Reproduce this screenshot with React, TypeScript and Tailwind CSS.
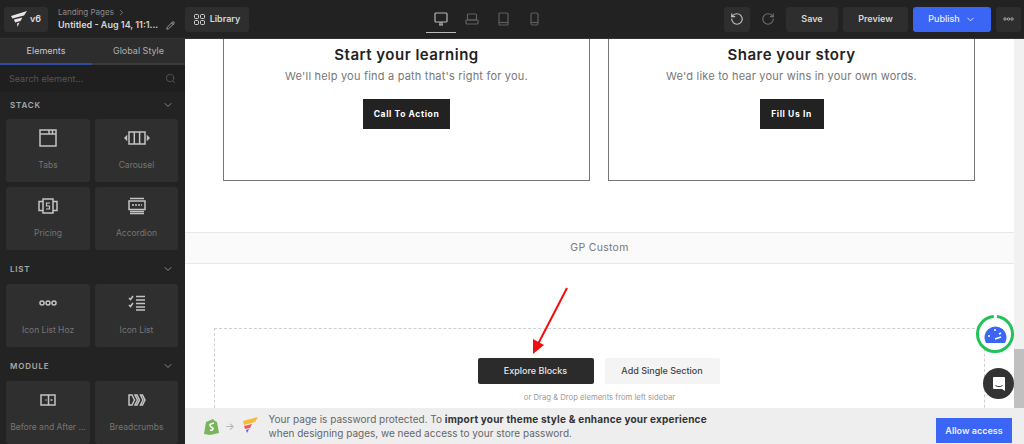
import { ChevronDown, ChevronRight, Pencil, Search, RotateCcw, RotateCw } from "lucide-react";
import type { ReactNode } from "react";

const Tile = ({ label, icon }: { label: string; icon: ReactNode }) => (
  <div className="h-[63px] rounded-[3px] bg-[#2f2f2f] flex flex-col items-center pt-[7px] text-[#757575]">
    <div className="h-[24px] flex items-center justify-center text-[#c4c4c4]">{icon}</div>
    <span className="mt-[8px] text-[8.5px] leading-[14px] whitespace-nowrap">{label}</span>
  </div>
);

const Section = ({ title, first }: { title: string; first?: boolean }) => (
  <div className={first ? "h-[28px] -mt-[1px] shrink-0 flex items-center justify-between pl-[10px] pr-[11px]" : "h-[28px] mt-[5px] mb-[1px] shrink-0 flex items-center justify-between pl-[10px] pr-[11px]"}>
    <span className="text-[8px] font-semibold tracking-[0.8px] text-[#a8a8a8]">{title}</span>
    <ChevronDown size={12} className="text-[#888]" />
  </div>
);

const icon = { fill: "none", stroke: "currentColor", strokeWidth: 1.5 };

const Sidebar = () => (
  <aside className="w-[185px] shrink-0 bg-[#232323] bg-[radial-gradient(#2e2e2e_0.5px,transparent_0.5px)] bg-[length:4px_4px] flex flex-col overflow-hidden">
    <div className="h-[26px] shrink-0 flex bg-[#2d2d2d] text-[9px]">
      <div className="w-[92px] flex items-center justify-center border-b-2 border-[#2f4a9e] text-[#c8c8c8]">Elements</div>
      <div className="flex-1 flex items-center justify-center border-b-2 border-[#3a3a3a] text-[#b0b0b0]">Global Style</div>
    </div>
    <div className="h-[27px] shrink-0 flex items-center justify-between pl-[9px] pr-[9px] bg-[#1f1f1f] text-[9px] text-[#565656]">
      <span>Search element...</span>
      <Search size={11} />
    </div>
    <Section title="STACK" first />
    <div className="shrink-0 grid grid-cols-[84px_83px] gap-x-[5px] gap-y-[5px] pl-[6px]">
      <Tile
        label="Tabs"
        icon={
          <svg width="18" height="18" viewBox="0 0 18 18" {...icon}>
            <rect x="1" y="1" width="16" height="16" />
            <path d="M1 5h16M10 1v4M13.5 1v4" />
          </svg>
        }
      />
      <Tile
        label="Carousel"
        icon={
          <svg width="26" height="14" viewBox="0 0 26 14" {...icon}>
            <rect x="5" y="1" width="16" height="12" />
            <path d="M10.3 1v12M15.6 1v12" />
            <path d="M2.5 5.5 1 7l1.5 1.500zM23.5 5.5 25 7l-1.5 1.500z" fill="currentColor" />
          </svg>
        }
      />
      <Tile
        label="Pricing"
        icon={
          <svg width="20" height="16" viewBox="0 0 20 16" {...icon}>
            <rect x="5" y="1" width="10" height="14" />
            <path d="M5 3.5H1v9h4M15 3.5h4v9h-4" />
            <path d="M12 5H8.5v3H11.5v3H8" strokeWidth={1.2} />
          </svg>
        }
      />
      <Tile
        label="Accordion"
        icon={
          <svg width="18" height="18" viewBox="0 0 18 18" {...icon}>
            <path d="M2 1.5h14M2 16.5h14" />
            <rect x="1" y="4" width="16" height="8.5" />
            <path d="M4 8h10" strokeDasharray="2 1" />
            <path d="M2 14.5h14" />
          </svg>
        }
      />
    </div>
    <Section title="LIST" />
    <div className="shrink-0 grid grid-cols-[84px_83px] gap-x-[5px] pl-[6px]">
      <Tile
        label="Icon List Hoz"
        icon={
          <svg width="18" height="6" viewBox="0 0 18 6" {...icon}>
            <circle cx="3" cy="3" r="2" />
            <circle cx="9" cy="3" r="2" />
            <circle cx="15" cy="3" r="2" />
          </svg>
        }
      />
      <Tile
        label="Icon List"
        icon={
          <svg width="18" height="16" viewBox="0 0 18 16" {...icon}>
            <path d="M1 3l1.5 1.5L5 1M1 10l1.5 1.5L5 8" />
            <path d="M8 1.5h9M8 5h9M8 8.5h9M8 12h9M8 15h9" />
          </svg>
        }
      />
    </div>
    <Section title="MODULE" />
    <div className="shrink-0 grid grid-cols-[84px_83px] gap-x-[5px] pl-[6px]">
      <Tile
        label="Before and After ..."
        icon={
          <svg width="16" height="12" viewBox="0 0 16 12" {...icon}>
            <rect x="1" y="1" width="14" height="10" />
            <path d="M8.5 1v10M5.5 6h1M10.5 6h2" />
          </svg>
        }
      />
      <Tile
        label="Breadcrumbs"
        icon={
          <svg width="18" height="12" viewBox="0 0 18 12" {...icon}>
            <path d="M1 1h3l2.5 5L4 11H1zM7 1h2l2.5 5L9 11H7l2.5-5zM12.5 1h2L17 6l-2.5 5h-2L15 6z" />
          </svg>
        }
      />
    </div>
  </aside>
);

const Topbar = () => (
  <header className="h-[39px] shrink-0 bg-[#222222] flex items-center pl-[4px] pr-[3px] border-b border-[#333]">
    <div className="w-[44px] h-[25px] rounded-[3px] bg-[#2e2e2e] flex items-center justify-center gap-[2px]">
      <svg width="17" height="17" viewBox="0 0 17 17" fill="#e6e6e6">
        <path d="M0 5 16 0l-3 4.5L1.5 7.5zM3 8.5 11.5 6.5 9.5 10 4 11.5zM6 12.5 8.5 11.5 6.5 16z" />
      </svg>
      <span className="text-[9px] font-semibold text-[#dedede]">v6</span>
    </div>
    <div className="ml-[10px] w-[117px]">
      <div className="flex items-center gap-[3px] text-[8px] leading-[12px] text-[#8a8a8a]">
        Landing Pages <ChevronRight size={9} />
      </div>
      <div className="flex items-center justify-between text-[9px] leading-[14px] font-semibold text-[#d6d6d6] whitespace-nowrap">
        Untitled - Aug 14, 11:1...
        <Pencil size={9} className="text-[#c0c0c0]" />
      </div>
    </div>
    <div className="ml-[10px] w-[64px] h-[25px] rounded-[3px] bg-[#2e2e2e] flex items-center justify-center gap-[5px] text-[9px] font-semibold text-[#d6d6d6]">
      <svg width="11" height="11" viewBox="0 0 11 11" fill="none" stroke="currentColor" strokeWidth="1">
        <rect x=".5" y=".5" width="4" height="4" rx="1" />
        <rect x="6.5" y=".5" width="4" height="4" rx="1" />
        <rect x=".5" y="6.5" width="4" height="4" rx="1" />
        <rect x="6.5" y="6.5" width="4" height="4" rx="1" />
      </svg>
      Library
    </div>
    <div className="ml-[177px] flex items-center h-full text-[#5f5f5f]">
      <div className="w-[30px] h-[33px] self-start pt-[6px] flex items-center justify-center border-b border-[#bbb] text-[#b5b5b5]">
        <svg width="14" height="14" viewBox="0 0 14 14" fill="none" stroke="currentColor" strokeWidth="1.2">
          <rect x="1" y="1" width="12" height="9" rx="1" />
          <path d="M5 13h4M6 10v3M8 10v3" />
        </svg>
      </div>
      <div className="w-[32px] flex justify-center">
        <svg width="14" height="12" viewBox="0 0 14 12" fill="none" stroke="currentColor" strokeWidth="1.2">
          <rect x="2.5" y="1" width="9" height="6" rx="1" />
          <path d="M1 7h12v3a1 1 0 0 1-1 1H2a1 1 0 0 1-1-1z" />
        </svg>
      </div>
      <div className="w-[30px] flex justify-center">
        <svg width="11" height="14" viewBox="0 0 11 14" fill="none" stroke="currentColor" strokeWidth="1.2">
          <rect x="1" y="1" width="9" height="12" rx="1" />
          <path d="M1 10.5h9" />
        </svg>
      </div>
      <div className="w-[32px] flex justify-center">
        <svg width="9" height="14" viewBox="0 0 9 14" fill="none" stroke="currentColor" strokeWidth="1.2">
          <rect x="1" y="1" width="7" height="12" rx="1.5" />
          <path d="M1 10.5h7" />
        </svg>
      </div>
    </div>
    <div className="ml-auto flex items-center gap-[5px] text-[9px] font-semibold text-[#d8d8d8]">
      <div className="w-[26px] h-[25px] rounded-[3px] bg-[#2e2e2e] flex items-center justify-center text-[#c0c0c0]">
        <RotateCcw size={14} />
      </div>
      <div className="w-[26px] h-[25px] flex items-center justify-center text-[#6e6e6e]">
        <RotateCw size={14} />
      </div>
      <div className="w-[52px] h-[25px] rounded-[3px] bg-[#2e2e2e] flex items-center justify-center">Save</div>
      <div className="w-[65px] h-[25px] rounded-[3px] bg-[#2e2e2e] flex items-center justify-center">Preview</div>
      <div className="w-[78px] h-[25px] rounded-[3px] bg-[#3b66f5] flex items-center justify-center gap-[5px] font-medium text-[#e8eeff]">
        Publish <ChevronDown size={11} />
      </div>
      <div className="w-[25px] h-[25px] rounded-[3px] bg-[#2e2e2e] flex items-center justify-center text-[#aaa]">
        <svg width="11" height="4" viewBox="0 0 11 4" fill="none" stroke="currentColor">
          <circle cx="2" cy="2" r="1.2" />
          <circle cx="5.5" cy="2" r="1.2" />
          <circle cx="9" cy="2" r="1.2" />
        </svg>
      </div>
    </div>
  </header>
);

const Card = ({ title, text, cta, btnWidth }: { title: string; text: string; cta: string; btnWidth: string }) => (
  <div className="flex-1 h-[142px] border-x border-b border-[#777] flex flex-col items-center">
    <h2 className="mt-[6px] text-[15px] leading-[20px] font-semibold tracking-[0.5px] text-[#222]">{title}</h2>
    <p className="mt-[3px] text-[11px] leading-[16px] tracking-[0.2px] text-[#777]">{text}</p>
    <div className={`mt-[15px] h-[30px] ${btnWidth} bg-[#222] flex items-center justify-center text-[8.5px] font-bold tracking-[0.6px] text-white`}>
      {cta}
    </div>
  </div>
);

const Canvas = () => (
  <main className="relative flex-1 min-w-0 flex flex-col bg-white">
    <div className="flex-1 min-h-0 overflow-hidden flex">
      <div className="flex-1 min-w-0 flex flex-col">
        <div className="shrink-0 flex gap-[18px] pl-[38px] pr-[39px]">
          <Card title="Start your learning" text="We'll help you find a path that's right for you." cta="Call To Action" btnWidth="w-[87px]" />
          <Card title="Share your story" text="We'd like to hear your wins in your own words." cta="Fill Us In" btnWidth="w-[64px]" />
        </div>
        <div className="shrink-0 mt-[51px] h-[32px] border-y border-[#e8e8e8] bg-[#fafafa] flex items-center justify-center text-[10.5px] tracking-[0.3px] text-[#777]">
          GP Custom
        </div>
        <div className="shrink-0 mt-[64px] ml-[29px] mr-[29px] h-[90px] border-t border-x border-dashed border-[#cfcfcf] flex flex-col items-center">
          <div className="mt-[29px] pr-[2px] flex gap-[11px] text-[9px] font-medium">
            <div className="w-[116px] h-[26px] rounded-[2px] bg-[#2b2b2b] text-[#e6e6e6] flex items-center justify-center">Explore Blocks</div>
            <div className="w-[115px] h-[26px] rounded-[2px] bg-[#f4f4f4] text-[#444] flex items-center justify-center">Add Single Section</div>
          </div>
          <p className="mt-[9px] text-[7.7px] leading-[10px] text-[#999]">or Drag &amp; Drop elements from left sidebar</p>
        </div>
      </div>
      <div className="w-[10px] shrink-0 bg-[#f1f1f1] flex flex-col justify-end">
        <div className="h-[59px] bg-[#c0c0c0]" />
      </div>
    </div>
    <div className="h-[36px] shrink-0 bg-[#eeeeee] flex items-center pl-[19px] pr-[12px]">
      <svg width="15" height="17" viewBox="0 0 15 17">
        <path d="M2 4 9 1l2 2 2 1 2 11-9 2-6-1z" fill="#7ab55c" />
        <path d="M10 5 7 6C5 6 6 9 8 9.5 10 10 9 13 6 12" fill="none" stroke="#fff" strokeWidth="1.5" />
      </svg>
      <span className="ml-[6px] text-[10px] text-[#aaa]">→</span>
      <svg className="ml-[5px]" width="18" height="18" viewBox="0 0 18 18">
        <path d="M3 4 18 0l-3 5-11 3z" fill="#f9b934" />
        <path d="M4 9l8-2-2 4-5 1z" fill="#f2575f" />
        <path d="M6 13l3-1-2 4z" fill="#3b66f5" />
      </svg>
      <p className="ml-[11px] text-[10px] leading-[14px] text-[#666]">
        Your page is password protected. To <b className="tracking-[0.2px] text-[#333]">import your theme style &amp; enhance your experience</b>
        <br />
        when designing pages, we need access to your store password.
      </p>
      <div className="ml-auto self-end mb-[1px] w-[76px] h-[25px] bg-[#3b66f5] flex items-center justify-center text-[9px] font-semibold text-[#eef]">
        Allow access
      </div>
    </div>

    {/* annotation arrow + floating widgets */}
    <svg className="absolute left-[340px] top-[245px]" width="50" height="75" viewBox="0 0 50 75">
      <path d="M42 4 12 62" stroke="#f00f0f" strokeWidth="2" fill="none" />
      <path d="M8 70 8 55 19 61z" fill="#f00f0f" />
    </svg>
    <div className="absolute left-[791px] top-[276px] w-[38px] h-[38px] rounded-full bg-white flex items-center justify-center">
      <svg className="absolute inset-0" width="38" height="38" viewBox="0 0 38 38">
        <circle cx="19" cy="19" r="17.5" fill="none" stroke="#22c25a" strokeWidth="3" strokeDasharray="106 4" strokeDashoffset="-2" transform="rotate(-90 19 19)" />
      </svg>
      <svg width="23" height="19" viewBox="0 0 23 19">
        <path d="M2 18A11 11 0 1 1 21 18z" fill="#3b66f5" />
        <path d="M11 14l6-2M4 11h2M11 4v2M17 8l-2 1" stroke="#fff" strokeWidth="1.5" />
      </svg>
    </div>
    <div className="absolute left-[798px] top-[329px] w-[31px] h-[31px] rounded-full bg-[#333] flex items-center justify-center">
      <svg width="14" height="16" viewBox="0 0 14 16">
        <path d="M1 2a1 1 0 0 1 1-1h10a1 1 0 0 1 1 1v13l-3-2H2a1 1 0 0 1-1-1z" fill="#fff" />
        <path d="M3.5 9.5c2 1.5 5 1.5 7 0" stroke="#333" fill="none" />
      </svg>
    </div>
  </main>
);

export default function App() {
  return (
    <div className="w-[1024px] h-[444px] overflow-hidden flex flex-col font-['Inter',sans-serif]">
      <Topbar />
      <div className="flex-1 min-h-0 flex">
        <Sidebar />
        <Canvas />
      </div>
    </div>
  );
}
